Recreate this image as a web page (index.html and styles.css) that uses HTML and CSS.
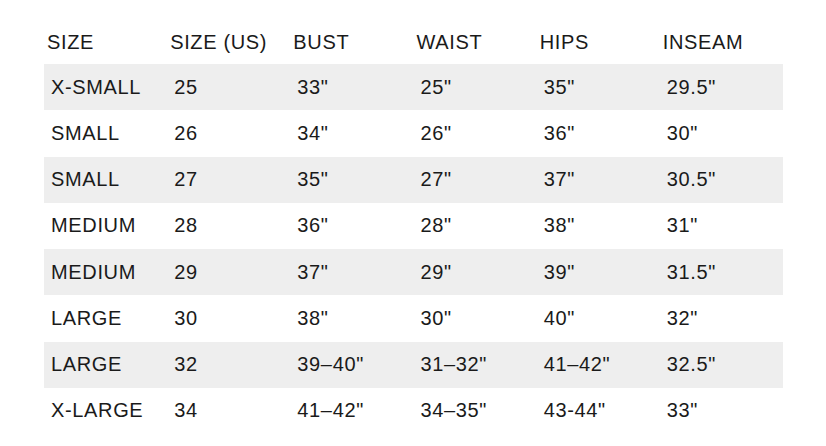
FILE: index.html
```html
<!DOCTYPE html>
<html>
<head>
<meta charset="utf-8">
<link rel="stylesheet" href="styles.css">
</head>
<body>
<table class="size-table">
  <thead>
    <tr><th>SIZE</th><th>SIZE (US)</th><th>BUST</th><th>WAIST</th><th>HIPS</th><th>INSEAM</th></tr>
  </thead>
  <tbody>
    <tr><td>X-SMALL</td><td>25</td><td>33"</td><td>25"</td><td>35"</td><td>29.5"</td></tr>
    <tr><td>SMALL</td><td>26</td><td>34"</td><td>26"</td><td>36"</td><td>30"</td></tr>
    <tr><td>SMALL</td><td>27</td><td>35"</td><td>27"</td><td>37"</td><td>30.5"</td></tr>
    <tr><td>MEDIUM</td><td>28</td><td>36"</td><td>28"</td><td>38"</td><td>31"</td></tr>
    <tr><td>MEDIUM</td><td>29</td><td>37"</td><td>29"</td><td>39"</td><td>31.5"</td></tr>
    <tr><td>LARGE</td><td>30</td><td>38"</td><td>30"</td><td>40"</td><td>32"</td></tr>
    <tr><td>LARGE</td><td>32</td><td>39–40"</td><td>31–32"</td><td>41–42"</td><td>32.5"</td></tr>
    <tr><td>X-LARGE</td><td>34</td><td>41–42"</td><td>34–35"</td><td>43-44"</td><td>33"</td></tr>
  </tbody>
</table>
</body>
</html>
```
FILE: styles.css
```css
html, body {
  margin: 0;
  padding: 0;
  background: #ffffff;
}
body {
  font-family: "Liberation Sans", Arial, sans-serif;
  color: #1a1a1a;
}
.size-table {
  margin: 21px 0 0 44px;
  width: 739px;
  border-collapse: collapse;
  table-layout: fixed;
  font-size: 20px;
  letter-spacing: 0.65px;
}
.size-table th {
  font-weight: normal;
  text-align: left;
  height: 43px;
  padding: 0 0 0 3px;
  vertical-align: middle;
}
.size-table td {
  height: 46.25px;
  padding: 0 0 0 7px;
  vertical-align: middle;
}
.size-table tbody tr:nth-child(odd) {
  background: #eeeeee;
}
```
